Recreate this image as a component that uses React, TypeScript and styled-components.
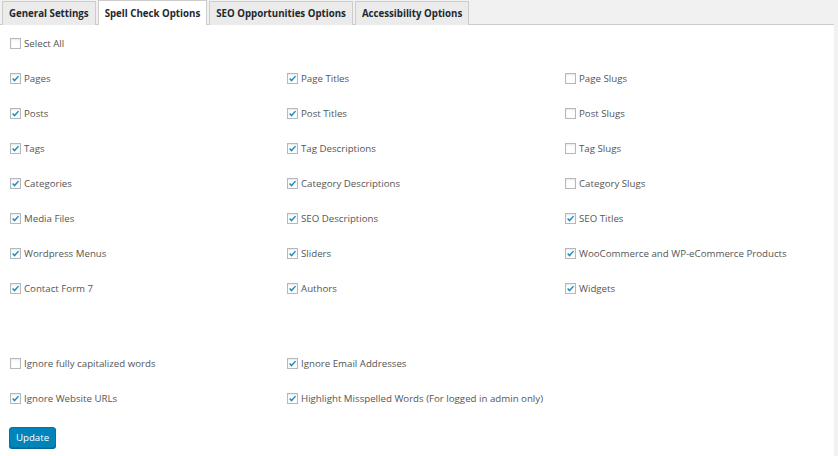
import styled, { createGlobalStyle } from "styled-components";

const GlobalStyle = createGlobalStyle`
  html, body {
    margin: 0;
    padding: 0;
    background: #f1f1f1;
  }
  body {
    font-family: "Open Sans", "Noto Sans", sans-serif;
    color: #444;
  }
`;

interface Option {
  label: string;
  checked: boolean;
}

const tabs = [
  "General Settings",
  "Spell Check Options",
  "SEO Opportunities Options",
  "Accessibility Options",
];

const mainOptions: Option[] = [
  { label: "Pages", checked: true },
  { label: "Page Titles", checked: true },
  { label: "Page Slugs", checked: false },
  { label: "Posts", checked: true },
  { label: "Post Titles", checked: true },
  { label: "Post Slugs", checked: false },
  { label: "Tags", checked: true },
  { label: "Tag Descriptions", checked: true },
  { label: "Tag Slugs", checked: false },
  { label: "Categories", checked: true },
  { label: "Category Descriptions", checked: true },
  { label: "Category Slugs", checked: false },
  { label: "Media Files", checked: true },
  { label: "SEO Descriptions", checked: true },
  { label: "SEO Titles", checked: true },
  { label: "Wordpress Menus", checked: true },
  { label: "Sliders", checked: true },
  { label: "WooCommerce and WP-eCommerce Products", checked: true },
  { label: "Contact Form 7", checked: true },
  { label: "Authors", checked: true },
  { label: "Widgets", checked: true },
];

const extraOptions: Option[] = [
  { label: "Ignore fully capitalized words", checked: false },
  { label: "Ignore Email Addresses", checked: true },
  { label: "", checked: false },
  { label: "Ignore Website URLs", checked: true },
  { label: "Highlight Misspelled Words (For logged in admin only)", checked: true },
];

const CheckItem = ({ label, checked }: Option) => (
  <Label>
    <Box>
      {checked && (
        <svg width="11" height="11" viewBox="0 0 11 11">
          <path
            d="M2 5.6 L4.3 8 L9.2 2.6"
            fill="none"
            stroke="#1e8cbe"
            strokeWidth="1.8"
          />
        </svg>
      )}
    </Box>
    {label}
  </Label>
);

const App = () => {
  return (
    <Page>
      <GlobalStyle />
      <TabBar>
        {tabs.map((t, i) => (
          <Tab key={t} active={i === 1}>
            {t}
          </Tab>
        ))}
      </TabBar>
      <Panel>
        <Grid>
          <CheckItem label="Select All" checked={false} />
        </Grid>
        <Grid>
          {mainOptions.map((o) => (
            <CheckItem key={o.label} {...o} />
          ))}
        </Grid>
        <Spacer />
        <Grid>
          {extraOptions.map((o, i) =>
            o.label ? <CheckItem key={o.label} {...o} /> : <span key={i} />
          )}
        </Grid>
        <UpdateButton>Update</UpdateButton>
      </Panel>
    </Page>
  );
};

const Page = styled.div`
  width: 838px;
  height: 456px;
  display: flex;
  flex-direction: column;
  overflow: hidden;
`;

const TabBar = styled.div`
  display: flex;
  gap: 2px;
  padding: 1px 0 0 2px;
  height: 25px;
  box-sizing: border-box;
  border-bottom: 1px solid #ccc;
  width: 834px;
`;

const Tab = styled.div<{ active?: boolean }>`
  display: flex;
  align-items: center;
  padding: 0 6px;
  height: ${(p) => (p.active ? "25px" : "24px")};
  border: 1px solid #ccc;
  border-bottom: none;
  background: ${(p) => (p.active ? "#fff" : "#ebebeb")};
  font-size: 9.7px;
  font-weight: 700;
  color: #23282d;
  box-sizing: border-box;
  margin-top: ${(p) => (p.active ? "-1px" : "0")};
  margin-bottom: ${(p) => (p.active ? "-1px" : "0")};
  white-space: nowrap;
`;

const Panel = styled.div`
  flex: 1;
  width: 834px;
  background: #fff;
  padding-left: 10px;
  box-sizing: border-box;
`;

const Grid = styled.div`
  display: grid;
  grid-template-columns: 277px 278px 1fr;
  grid-auto-rows: 35px;
`;

const Spacer = styled.div`
  height: 40px;
`;

const Label = styled.label`
  display: flex;
  align-items: center;
  gap: 3px;
  font-size: 9.7px;
  color: #555;
  white-space: nowrap;
  padding-top: 1px;
`;

const Box = styled.span`
  width: 11px;
  height: 11px;
  border: 1px solid #b4b9be;
  box-sizing: border-box;
  display: flex;
  align-items: center;
  justify-content: center;
  box-shadow: inset 0 1px 2px rgba(0, 0, 0, 0.1);
  background: #fff;
  svg {
    display: block;
  }
`;

const UpdateButton = styled.button`
  margin-top: 12px;
  margin-left: -1px;
  width: 47px;
  height: 21px;
  background: #0085ba;
  border: 1px solid #0073aa;
  border-radius: 3px;
  color: #fff;
  font-family: "Open Sans", "Noto Sans", sans-serif;
  font-size: 9.7px;
  padding: 0;
  box-shadow: 0 1px 0 #006799;
`;

export default App;
